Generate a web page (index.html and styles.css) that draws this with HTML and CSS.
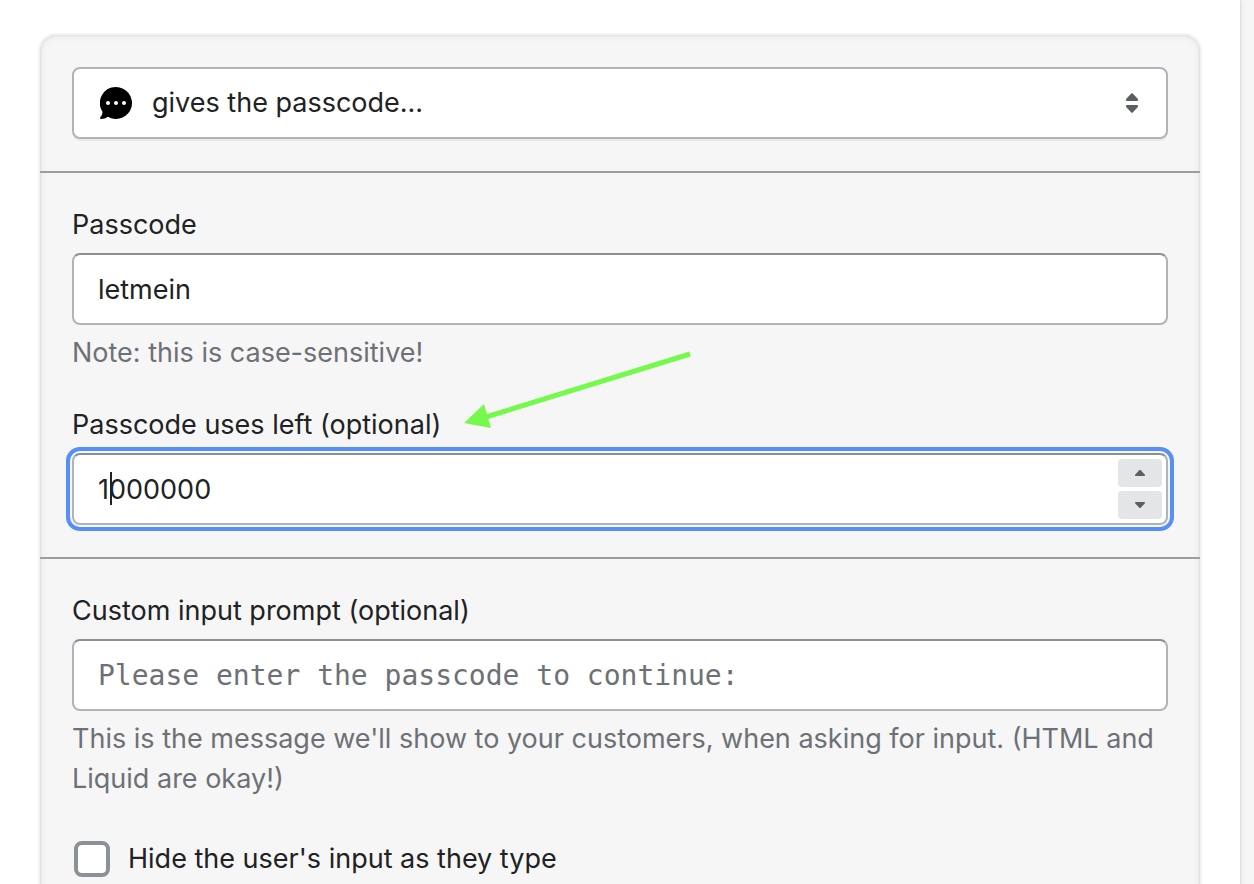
FILE: index.html
```html
<!DOCTYPE html>
<html lang="en">
<head>
<meta charset="utf-8">
<meta name="viewport" content="width=device-width, initial-scale=1">
<title>Passcode settings</title>
<link rel="stylesheet" href="styles.css">
</head>
<body>
<main class="page">
  <form class="card">
    <section class="section">
      <div class="control">
        <svg class="bubble" viewBox="0 0 32 32" aria-hidden="true">
          <path d="M16 0a16 16 0 1 1-8.100 29.800C5.800 31.300 3.500 32 1.300 32 .1 32-.3 30.800.5 30c1.400-1.400 2.100-3.300 2-5.300A16 16 0 0 1 16 0z"/>
          <circle class="dot" cx="8" cy="16" r="2"/>
          <circle class="dot" cx="16" cy="16" r="2"/>
          <circle class="dot" cx="24" cy="16" r="2"/>
        </svg>
        <select class="input select" aria-label="Condition">
          <option>gives the passcode...</option>
        </select>
        <svg class="updown" viewBox="0 0 12 20" aria-hidden="true">
          <path d="M5.300.4a1 1 0 0 1 1.400 0l5 5.400C12.400 6.700 12 8 11 8H1C0 8-.4 6.700.3 5.800zM5.300 19.600a1 1 0 0 0 1.400 0l5-5.400C12.400 13.300 12 12 11 12H1c-1 0-1.400 1.300-.7 2.200z"/>
        </svg>
      </div>
    </section>

    <section class="section">
      <div class="field">
        <label class="label" for="passcode">Passcode</label>
        <input class="input" id="passcode" type="text" value="letmein" aria-describedby="passcode-help">
        <p class="help" id="passcode-help">Note: this is case-sensitive!</p>
      </div>
      <div class="field">
        <label class="label" for="uses">Passcode uses left (optional)</label>
        <div class="control focused">
          <input class="input number" id="uses" type="number" value="1000000">
          <span class="caret"></span>
          <div class="spinner">
            <button class="step" type="button" aria-label="Increase">
              <svg class="step-icon" viewBox="0 0 10 6" aria-hidden="true"><path d="M4.300.3a1 1 0 0 1 1.400 0l4 4.200C10.300 5.200 10 6 9.200 6H.8C0 6-.3 5.200.3 4.500z"/></svg>
            </button>
            <button class="step" type="button" aria-label="Decrease">
              <svg class="step-icon" viewBox="0 0 10 6" aria-hidden="true"><path d="M4.300 5.700a1 1 0 0 0 1.400 0l4-4.200C10.300.8 10 0 9.200 0H.8C0 0-.3.8.3 1.500z"/></svg>
            </button>
          </div>
        </div>
        <svg class="arrow" viewBox="0 0 228 78" aria-hidden="true">
          <path class="arrow-line" d="M22 66L226 3"/>
          <path class="arrow-head" d="M0 72L20 53L27 77z"/>
        </svg>
      </div>
    </section>

    <section class="section">
      <div class="field">
        <label class="label" for="prompt">Custom input prompt (optional)</label>
        <input class="input mono" id="prompt" type="text" placeholder="Please enter the passcode to continue:" aria-describedby="prompt-help">
        <p class="help" id="prompt-help">This is the message we'll show to your customers, when asking for input. (HTML and Liquid are okay!)</p>
      </div>
      <label class="choice">
        <input class="checkbox" type="checkbox">
        <span>Hide the user's input as they type</span>
      </label>
    </section>
  </form>
</main>
</body>
</html>
```
FILE: styles.css
```css
* {
  box-sizing: border-box;
}

body {
  margin: 0;
  height: 100vh;
  overflow: hidden;
  padding-right: 14px;
  background: #f6f6f7;
  color: #202223;
  font-family: Inter, "Liberation Sans", sans-serif;
  font-size: 27px;
  line-height: 40px;
}

.page {
  min-height: 100vh;
  padding: 35px 40px;
  background: #fff;
  box-shadow: 0 0 6px rgba(23, 24, 24, 0.12), 0 0 2px rgba(0, 0, 0, 0.15);
}

.card {
  border-radius: 16px;
  background: #f6f6f6;
  box-shadow: inset 0 0 10px rgba(23, 24, 24, 0.07), inset 0 0 3px rgba(0, 0, 0, 0.12), 0 0 0 2px #f4f4f4;
}

.section {
  display: flex;
  flex-direction: column;
  gap: 32px;
  padding: 32px;
}

.section + .section {
  border-top: 2px solid #999ea3;
}

.field {
  position: relative;
  display: flex;
  flex-direction: column;
  gap: 8px;
}

.help {
  margin: 0;
  color: #6d7175;
}

.control {
  position: relative;
  border-radius: 8px;
}

.input {
  display: block;
  width: 100%;
  height: 72px;
  margin: 0;
  padding: 0 24px;
  border: 2px solid #aeb4b9;
  border-top-color: #898f94;
  border-radius: 8px;
  outline: 0;
  background: #fff;
  color: inherit;
  font: inherit;
}

.mono {
  font-family: "DejaVu Sans Mono", monospace;
  font-size: 28px;
}

.mono::placeholder {
  color: #6d7175;
  opacity: 1;
}

.select {
  appearance: none;
  padding-left: 78px;
  border-top-color: #aeb4b9;
  box-shadow: 0 2px 0 rgba(0, 0, 0, 0.05);
}

.bubble {
  position: absolute;
  top: 20px;
  left: 28px;
  width: 32px;
  height: 32px;
}

.dot {
  fill: #fff;
}

.updown {
  position: absolute;
  top: 26px;
  right: 30px;
  width: 12px;
  height: 20px;
  fill: #5c5f62;
}

.focused {
  outline: 4px solid #588ff7;
  outline-offset: 2px;
}

.number {
  appearance: textfield;
}

.number::-webkit-inner-spin-button {
  appearance: none;
  margin: 0;
}

.caret {
  position: absolute;
  top: 19px;
  left: 38px;
  width: 2px;
  height: 33px;
  background: #202223;
}

.spinner {
  position: absolute;
  top: 6px;
  right: 6px;
  bottom: 6px;
  display: flex;
  flex-direction: column;
  gap: 4px;
  width: 44px;
}

.step {
  display: flex;
  flex: 1;
  align-items: center;
  justify-content: center;
  padding: 0;
  border: 0;
  border-radius: 4px;
  background: #e4e5e7;
}

.step-icon {
  width: 10px;
  height: 6px;
  fill: #5c5f62;
}

.arrow {
  position: absolute;
  top: -54px;
  left: 392px;
  width: 228px;
  height: 78px;
  pointer-events: none;
}

.arrow-line {
  fill: none;
  stroke: #75f94c;
  stroke-width: 5;
}

.arrow-head {
  fill: #75f94c;
}

.choice {
  display: flex;
  align-items: center;
  gap: 18px;
  margin-top: 8px;
  padding-left: 2px;
}

.checkbox {
  appearance: none;
  flex: none;
  width: 36px;
  height: 36px;
  margin: 0;
  border: 4px solid #8c9196;
  border-radius: 8px;
  background: #fff;
}
```
